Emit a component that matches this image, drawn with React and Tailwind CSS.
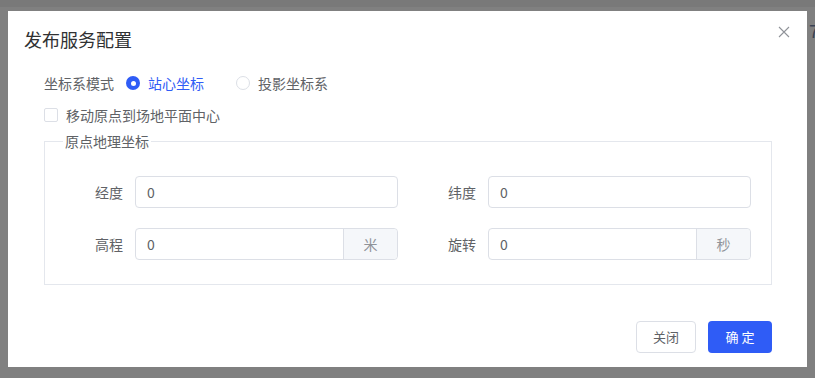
import { useState } from 'react';

function Field({ label, suffix }) {
  return (
    <div className="flex items-center">
      <label className="w-[90px] pr-[12px] text-right text-[14px] text-[#606266]">{label}</label>
      <div className="flex h-[32px] w-[263px] rounded-[4px] border border-[#dcdfe6] bg-white">
        <input
          defaultValue="0"
          className="min-w-0 flex-1 bg-transparent px-[11px] text-[14px] text-[#606266] outline-none"
        />
        {suffix && (
          <div className="flex w-[54px] items-center justify-center rounded-r-[4px] border-l border-[#dcdfe6] bg-[#f5f7fa] text-[14px] text-[#909399]">
            {suffix}
          </div>
        )}
      </div>
    </div>
  );
}

export default function App() {
  const [mode, setMode] = useState('station');

  return (
    <div
      className="relative h-[378px] w-[815px] overflow-hidden bg-[#808080]"
      style={{ fontFamily: '"Noto Sans CJK SC", "Noto Sans", sans-serif' }}
    >
      <div className="h-[7px] bg-[#797979]" />
      <span className="absolute left-[809px] top-[17px] text-[18px] text-[#1d2a44] opacity-70">7</span>

      <div className="relative ml-[8px] mt-[4px] flex h-[356px] w-[799px] flex-col bg-white">
        {/* header */}
        <div className="flex items-center justify-between px-[16px] pt-[16px]">
          <h2 className="text-[18px] leading-[24px] text-[#303133]">发布服务配置</h2>
          <button className="absolute right-[17px] top-[15px] text-[#909399]">
            <svg width="12" height="12" viewBox="0 0 12 12" fill="none" stroke="currentColor" strokeWidth="1.1">
              <path d="M1 1L11 11M11 1L1 11" />
            </svg>
          </button>
        </div>

        {/* body */}
        <div className="pl-[36px] pr-[35px] pt-[22px]">
          <div className="flex h-[20px] items-center text-[14px]">
            <span className="text-[#606266]">坐标系模式</span>
            <label className="ml-[12px] flex cursor-pointer items-center" onClick={() => setMode('station')}>
              {mode === 'station' ? (
                <span className="flex h-[14px] w-[14px] items-center justify-center rounded-full bg-[#2f5cf6]">
                  <span className="h-[5px] w-[5px] rounded-full bg-white" />
                </span>
              ) : (
                <span className="h-[14px] w-[14px] rounded-full border border-[#dcdfe6]" />
              )}
              <span className={mode === 'station' ? 'ml-[8px] text-[#2f5cf6]' : 'ml-[8px] text-[#606266]'}>站心坐标</span>
            </label>
            <label className="ml-[32px] flex cursor-pointer items-center" onClick={() => setMode('proj')}>
              {mode === 'proj' ? (
                <span className="flex h-[14px] w-[14px] items-center justify-center rounded-full bg-[#2f5cf6]">
                  <span className="h-[5px] w-[5px] rounded-full bg-white" />
                </span>
              ) : (
                <span className="h-[14px] w-[14px] rounded-full border border-[#dcdfe6]" />
              )}
              <span className={mode === 'proj' ? 'ml-[8px] text-[#2f5cf6]' : 'ml-[8px] text-[#606266]'}>投影坐标系</span>
            </label>
          </div>

          <label className="mt-[12px] flex h-[20px] items-center text-[14px] text-[#606266]">
            <span className="h-[14px] w-[14px] rounded-[2px] border border-[#dcdfe6]" />
            <span className="ml-[8px]">移动原点到场地平面中心</span>
          </label>

          <fieldset className="mt-[6px] border border-[#e4e7ed] pb-[24px] pr-[20px]">
            <legend className="ml-[18px] px-[2px] text-[14px] leading-[20px] text-[#606266]">原点地理坐标</legend>
            <div className="mt-[25px] grid grid-cols-2 gap-y-[20px]">
              <Field label="经度" />
              <Field label="纬度" />
              <Field label="高程" suffix="米" />
              <Field label="旋转" suffix="秒" />
            </div>
          </fieldset>
        </div>

        {/* footer */}
        <div className="mt-auto flex justify-end gap-[12px] pb-[14px] pr-[35px]">
          <button className="h-[32px] w-[60px] rounded-[4px] border border-[#dcdfe6] bg-white text-[13px] text-[#606266]">
            关闭
          </button>
          <button className="h-[32px] w-[64px] rounded-[4px] bg-[#2f5cf6] text-[13px] text-white">确 定</button>
        </div>
      </div>
    </div>
  );
}
